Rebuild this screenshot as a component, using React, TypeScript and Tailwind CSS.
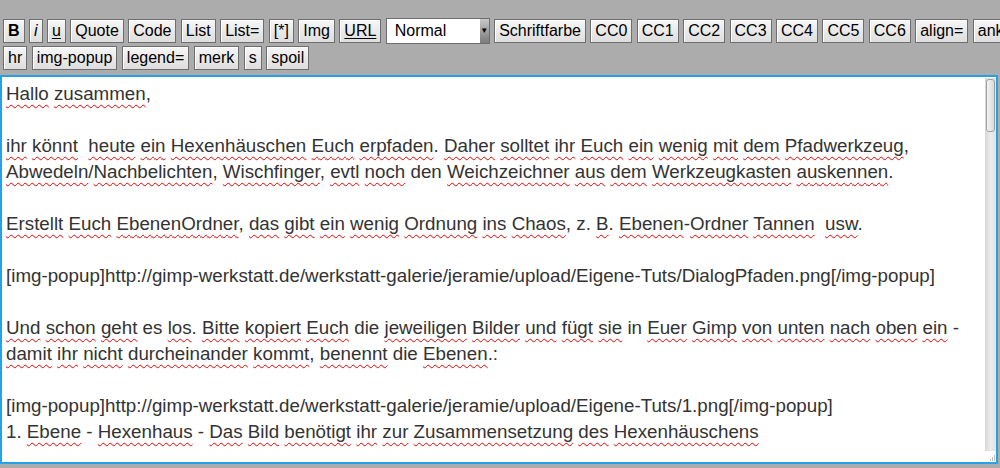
import { ReactNode } from "react";

const row1 = [
  "B", "i", "u", "Quote", "Code", "List", "List=", "[*]", "Img", "URL",
];
const row1b = [
  "Schriftfarbe", "CC0", "CC1", "CC2", "CC3", "CC4", "CC5", "CC6", "align=", "anker",
];
const row2 = ["hr", "img-popup", "legend=", "merk", "s", "spoil"];

// words wrapped in ~ get the spellcheck squiggle
const lines = [
  "~Hallo~ ~zusammen~,",
  "",
  "~ihr~ ~könnt~  ~heute~ ~ein~ ~Hexenhäuschen~ ~Euch~ ~erpfaden~. ~Daher~ ~solltet~ ~ihr~ ~Euch~ ~ein~ ~wenig~ ~mit~ ~dem~ ~Pfadwerkzeug~,",
  "~Abwedeln~/~Nachbelichten~, ~Wischfinger~, ~evtl~ ~noch~ den ~Weichzeichner~ ~aus~ ~dem~ ~Werkzeugkasten~ ~auskennen~.",
  "",
  "~Erstellt~ ~Euch~ ~EbenenOrdner~, ~das~ ~gibt~ ~ein~ ~wenig~ ~Ordnung~ ~ins~ ~Chaos~, z. ~B~. ~Ebenen~-~Ordner~ ~Tannen~  ~usw~.",
  "",
  "[img-popup]http://gimp-werkstatt.de/werkstatt-galerie/jeramie/upload/Eigene-Tuts/DialogPfaden.png[/img-popup]",
  "",
  "~Und~ ~schon~ ~geht~ es ~los~. ~Bitte~ ~kopiert~ ~Euch~ die ~jeweiligen~ ~Bilder~ ~und~ ~fügt~ ~sie~ in ~Euer~ ~Gimp~ ~von~ ~unten~ ~nach~ ~oben~ ~ein~ -",
  "~damit~ ~ihr~ ~nicht~ ~durcheinander~ ~kommt~, ~benennt~ die ~Ebenen~.:",
  "",
  "[img-popup]http://gimp-werkstatt.de/werkstatt-galerie/jeramie/upload/Eigene-Tuts/1.png[/img-popup]",
  "1. ~Ebene~ - ~Hexenhaus~ - ~Das~ ~Bild~ ~benötigt~ ~ihr~ ~zur~ ~Zusammensetzung~ ~des~ ~Hexenhäuschens~",
];

function Line({ text }: { text: string }) {
  const parts = text.split("~");
  return (
    <div className="h-[26px] leading-[26px] whitespace-pre">
      {parts.map((p, i): ReactNode =>
        i % 2 === 1 ? (
          <span
            key={i}
            className="underline decoration-wavy decoration-[#f00000] decoration-1 underline-offset-[4px]"
          >
            {p}
          </span>
        ) : (
          <span key={i}>{p}</span>
        )
      )}
      {text === "" && "\u00a0"}
    </div>
  );
}

function ToolButton({ label }: { label: string }) {
  let cls = "";
  if (label === "B") cls = "font-bold";
  if (label === "i") cls = "italic";
  if (label === "u" || label === "URL") cls = "underline underline-offset-2";
  return (
    <button
      className={`h-[24px] shrink-0 px-[4px] border border-[#6e6e6e] bg-gradient-to-b from-[#f6f6f6] to-[#dedede] shadow-[inset_1px_1px_0_#ffffff] text-[16px] leading-none text-black ${cls}`}
    >
      {label}
    </button>
  );
}

function SizeSelect() {
  return (
    <div className="h-[26px] w-[104px] shrink-0 flex border border-[#6e6e6e] bg-white">
      <span className="flex-1 pl-[8px] text-[16px] leading-[24px] text-black">Normal</span>
      <span className="w-[9px] flex items-center justify-center bg-gradient-to-b from-[#c8c8c8] to-[#7a7a7a] text-[8px] text-black">
        ▼
      </span>
    </div>
  );
}

export default function App() {
  return (
    <div
      className="w-[1000px] h-[468px] overflow-hidden bg-[#acacac]"
      style={{ fontFamily: '"Liberation Sans", Arial, sans-serif' }}
    >
      <div className="pt-[18px] pl-[3px] flex flex-col gap-[2px]">
        <div className="flex items-center gap-[4.4px] whitespace-nowrap">
          {row1.map((l) => (
            <ToolButton key={l} label={l} />
          ))}
          <SizeSelect />
          {row1b.map((l) => (
            <ToolButton key={l} label={l} />
          ))}
        </div>
        <div className="flex items-center gap-[4.5px]">
          {row2.map((l) => (
            <ToolButton key={l} label={l} />
          ))}
        </div>
      </div>

      <div className="mt-[5px] w-[998px] h-[389px] flex border-2 border-[#22a3e8] bg-white">
        <div className="flex-1 overflow-hidden pt-[4px] pl-[4px] text-[18.75px] text-[#333333]">
          {lines.map((t, i) => (
            <Line key={i} text={t} />
          ))}
        </div>
        <div className="w-[11px] flex flex-col pt-[1px]">
          <div className="flex-1 bg-gradient-to-r from-[#d6d6d6] via-[#ececec] to-[#e2e2e2] pt-[1px] px-[1px]">
            <div className="h-[53px] rounded-[3px] border border-[#a0a0a0] bg-gradient-to-r from-[#f4f4f4] to-[#dadada]" />
          </div>
          <div className="h-[11px] bg-white flex items-end justify-end pr-[1px] pb-[1px] gap-[1px]">
            <span className="w-[1px] h-[2px] bg-[#bbbbbb]" />
            <span className="w-[1px] h-[4px] bg-[#bbbbbb]" />
            <span className="w-[1px] h-[6px] bg-[#bbbbbb]" />
          </div>
        </div>
      </div>
    </div>
  );
}
